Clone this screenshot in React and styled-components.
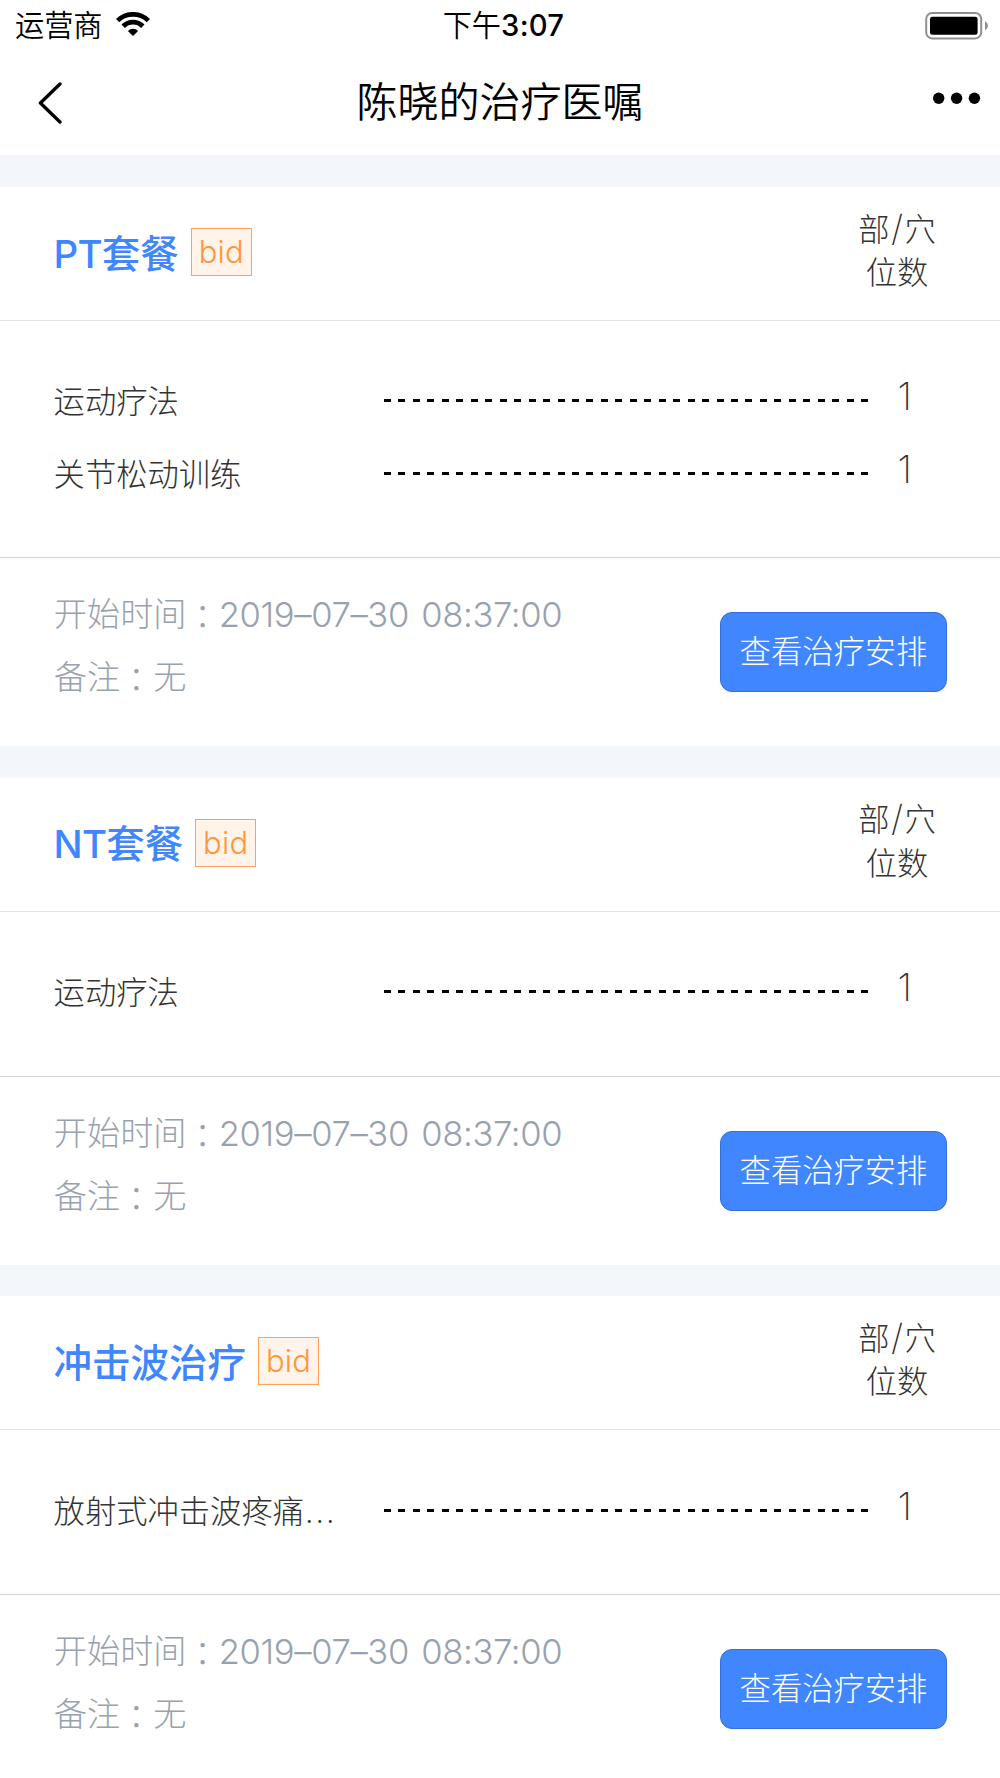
import React from "react";
import styled, { createGlobalStyle } from "styled-components";

const latin = `Inter, "Noto Sans CJK SC", sans-serif`;

const GlobalStyle = createGlobalStyle`
  *, *::before, *::after { box-sizing: border-box; }
  body { margin: 0; background: #fff; font-family: ${latin}; }
`;

const Screen = styled.main`
  width: 1000px;
  height: 1778px;
  overflow: hidden;
  background: #f3f7fc;
  color: #333;
  font-weight: 300;
`;

const TopArea = styled.header`
  height: 155px;
  background: #fff;
  color: #000;
`;

const StatusBar = styled.div`
  display: grid;
  grid-template-columns: 1fr auto 1fr;
  align-items: center;
  height: 50px;
  padding: 0 11px 0 15px;
  font-size: 29.2px;
  font-weight: 350;
`;

const Carrier = styled.div`
  display: flex;
  align-items: center;
  gap: 13px;
  line-height: 50px;
  svg { margin-bottom: 2px; }
`;

const Clock = styled.time`
  line-height: 50px;
  padding: 1px 0 0 3px;
  b { font-weight: 550; letter-spacing: 0.3px; }
`;

const BatterySlot = styled.div`
  display: flex;
  justify-content: flex-end;
`;

const NavBar = styled.nav`
  display: grid;
  grid-template-columns: 1fr auto 1fr;
  align-items: center;
  height: 105px;
  padding: 0 19px 0 37px;
`;

const PageTitle = styled.h1`
  margin: 0;
  padding-right: 18px;
  font-size: 41px;
  font-weight: 350;
  line-height: 105px;
`;

const IconButton = styled.button`
  display: flex;
  justify-self: ${(p) => p.$side};
  padding: 0;
  border: 0;
  background: none;
  color: #000;
`;

const OrderList = styled.div`
  display: flex;
  flex-direction: column;
  gap: 31.5px;
  padding-top: 32px;
`;

const Card = styled.section`
  flex: none;
  background: #fff;
`;

const CardHead = styled.div`
  display: flex;
  align-items: center;
  justify-content: space-between;
  height: 134px;
  padding: 0 54px 0 53.6px;
  border-bottom: 1px solid #e3e3e3;
`;

const NameGroup = styled.div`
  display: flex;
  align-items: center;
  gap: 12px;
`;

const OrderName = styled.h2`
  margin: 0;
  color: #3f86ff;
  font-size: 38.5px;
  font-weight: 500;
  line-height: 50px;
`;

const OrderCode = styled.span`
  font-weight: 550;
  letter-spacing: -0.8px;
`;

const Tag = styled.span`
  display: flex;
  align-items: center;
  justify-content: center;
  width: 61px;
  height: 48px;
  margin-bottom: 3px;
  border: 1px solid #ffa352;
  background: #fff3ea;
  color: #ff963a;
  font-size: 31px;
  font-weight: 300;
  letter-spacing: 0.3px;
  line-height: 46px;
`;

const CountLabel = styled.div`
  width: 98px;
  padding-bottom: 3px;
  font-size: 31.3px;
  line-height: 43.4px;
  text-align: center;
`;

const Slash = styled.span`
  padding: 0 1.5px;
  font-size: 36px;
  font-weight: 250;
  line-height: 1;
`;

const Items = styled.div`
  padding: 45.3px 53.6px 46.3px;
  border-bottom: 1px solid #d2d2d2;
`;

const ItemRow = styled.div`
  display: flex;
  align-items: center;
  height: 72.4px;
`;

const ItemName = styled.span`
  width: 330.4px;
  font-size: 31.3px;
  line-height: 72px;
`;

const Ellipsis = styled.span`
  font-size: 38px;
  font-weight: 250;
  line-height: 1;
`;

const Leader = styled.span`
  width: 484px;
  height: 3px;
  margin-bottom: 3px;
  background: repeating-linear-gradient(90deg, #000 0 7px, transparent 7px 14.46px);
`;

const Count = styled.span`
  padding: 0 0 11px 29.5px;
  font-size: 38px;
  font-weight: 250;
  line-height: 61px;
`;

const CardFoot = styled.div`
  display: flex;
  align-items: center;
  justify-content: space-between;
  height: 188px;
  padding: 0 53px 0 53.8px;
`;

const Details = styled.div`
  padding-bottom: 12.4px;
  color: #98a2ae;
  font-size: 33.2px;
  line-height: 63px;
`;

const DetailLine = styled.div`
  display: flex;
  height: 63px;
`;

const Colon = styled.span`
  margin: 0 0.5px 0 -0.5px;
  font-family: "Noto Sans CJK TC", sans-serif;
`;

const Digits = styled.span`
  margin-left: -1px;
  font-size: 34.6px;
  font-weight: 280;
  letter-spacing: -0.37px;
  word-spacing: 3px;
`;

const ScheduleButton = styled.button`
  width: 227px;
  height: 80px;
  padding: 0;
  border: 1px solid #3470d6;
  border-radius: 12px;
  background: #3f86ff;
  color: #fff;
  font: 300 31.3px/78px ${latin};
`;

const WifiIcon = () => (
  <svg width="34" height="25" viewBox="0 0 34 25">
    <path d="M0 7A24 24 0 0 1 34 7L30.7 10.3A19.4 19.4 0 0 0 3.3 10.3Z" />
    <path d="M5.5 12.5A16.2 16.2 0 0 1 28.5 12.5L25.1 15.9A11.4 11.4 0 0 0 8.9 15.9Z" />
    <path d="M11.9 18.9A7.2 7.2 0 0 1 22.1 18.9L17 24Z" />
  </svg>
);

const BatteryIcon = () => (
  <svg width="64" height="28" viewBox="0 0 64 28">
    <rect x="1.2" y="1" width="55" height="25.4" rx="6" fill="none" stroke="#8f8f8f" strokeWidth="2" />
    <rect x="5" y="4.8" width="47.6" height="18" rx="2.4" />
    <path d="M60 9Q63 10.8 63 13.8Q63 16.8 60 18.6Z" fill="#8f8f8f" />
  </svg>
);

const BackIcon = () => (
  <svg width="26" height="42" viewBox="0 0 26 42" fill="none" stroke="#000" strokeWidth="3.3" strokeLinecap="round" strokeLinejoin="round">
    <path d="M23 2L3.4 21L23 40" />
  </svg>
);

const MoreIcon = () => (
  <svg width="48" height="22" viewBox="0 0 48 22">
    <circle cx="5.7" cy="6.3" r="5.7" />
    <circle cx="23.6" cy="6.3" r="5.7" />
    <circle cx="41.4" cy="6.3" r="5.7" />
  </svg>
);

const orders = [
  { code: "PT", name: "套餐", items: [{ label: "运动疗法" }, { label: "关节松动训练" }] },
  { code: "NT", name: "套餐", items: [{ label: "运动疗法" }] },
  { name: "冲击波治疗", items: [{ label: "放射式冲击波疼痛", truncated: true }] },
];

const OrderCard = ({ code, name, items }) => (
  <Card>
    <CardHead>
      <NameGroup>
        <OrderName>{code && <OrderCode>{code}</OrderCode>}{name}</OrderName>
        <Tag>bid</Tag>
      </NameGroup>
      <CountLabel>部<Slash>/</Slash>穴<br />位数</CountLabel>
    </CardHead>
    <Items>
      {items.map(({ label, truncated }) => (
        <ItemRow key={label}>
          <ItemName>{label}{truncated && <Ellipsis>…</Ellipsis>}</ItemName>
          <Leader />
          <Count>1</Count>
        </ItemRow>
      ))}
    </Items>
    <CardFoot>
      <Details>
        <DetailLine>开始时间<Colon>：</Colon><Digits>2019–07–30 08:37:00</Digits></DetailLine>
        <DetailLine>备注<Colon>：</Colon>无</DetailLine>
      </Details>
      <ScheduleButton>查看治疗安排</ScheduleButton>
    </CardFoot>
  </Card>
);

export default function App() {
  return (
    <>
      <GlobalStyle />
      <Screen>
        <TopArea>
          <StatusBar>
            <Carrier>运营商<WifiIcon /></Carrier>
            <Clock>下午<b>3:07</b></Clock>
            <BatterySlot><BatteryIcon /></BatterySlot>
          </StatusBar>
          <NavBar>
            <IconButton $side="start" aria-label="返回"><BackIcon /></IconButton>
            <PageTitle>陈晓的治疗医嘱</PageTitle>
            <IconButton $side="end" aria-label="更多"><MoreIcon /></IconButton>
          </NavBar>
        </TopArea>
        <OrderList>
          {orders.map((order) => <OrderCard key={order.code || order.name} {...order} />)}
        </OrderList>
      </Screen>
    </>
  );
}
